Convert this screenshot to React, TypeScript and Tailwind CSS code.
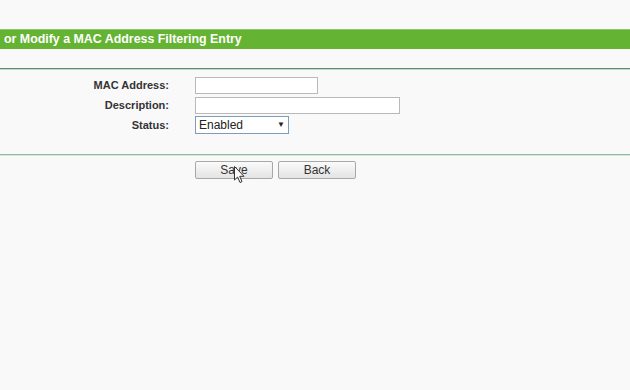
import React from "react";

const font = { fontFamily: '"Liberation Sans", Arial, sans-serif' };

function Row({ label, children }: { label: string; children: React.ReactNode }) {
  return (
    <div className="flex h-[20px] items-center">
      <div className="w-[169px] text-right text-[11px] font-bold text-[#333]">{label}</div>
      <div className="ml-[26px] flex items-center">{children}</div>
    </div>
  );
}

function Cursor() {
  return (
    <svg
      className="pointer-events-none absolute left-[39px] top-[5px]"
      width="12"
      height="18"
      viewBox="0 0 12 18"
    >
      <path
        d="M0.5 0.5 L0.5 14 L3.6 11 L6 16.5 L8 15.6 L5.7 10.3 L10 10.3 Z"
        fill="#fff"
        stroke="#333"
        strokeWidth="1"
        strokeLinejoin="round"
      />
    </svg>
  );
}

const btn =
  "block h-[18px] w-[78px] rounded-[2px] border border-[#a8a8a8] bg-gradient-to-b from-[#fafafa] to-[#e4e4e4] text-[12px] leading-none text-[#333]";

export default function App() {
  return (
    <div className="h-[390px] w-[630px] overflow-hidden bg-[#f9f9f9]" style={font}>
      <div className="h-[29px]" />
      <div className="flex h-[20px] items-center border-t border-[#8fc66a] bg-[#64b332] pl-[4px] text-[12.4px] font-bold text-white">
        or Modify a MAC Address Filtering Entry
      </div>

      <div className="mt-[19px] h-[2px] border-t border-[#5f8c72] bg-[#c2d9c9]" />

      <div className="flex flex-col pt-[5px]">
        <Row label="MAC Address:">
          <input className="h-[17px] w-[123px] border border-[#b9b9b9] bg-white outline-none" />
        </Row>
        <Row label="Description:">
          <input className="h-[17px] w-[205px] border border-[#b9b9b9] bg-white outline-none" />
        </Row>
        <Row label="Status:">
          <div className="flex h-[18px] w-[94px] items-center justify-between border border-[#7f9db9] bg-white pl-[3px] pr-[3px] text-[12px] text-[#222]">
            <span>Enabled</span>
            <span className="text-[8px] leading-none">▼</span>
          </div>
        </Row>
      </div>

      <div className="mt-[19px] h-[2px] border-t border-[#8fb9a0] bg-[#d4e6da]" />

      <div className="ml-[195px] mt-[5px] flex items-start gap-[5px]">
        <div className="relative">
          <button className={btn}>Save</button>
          <Cursor />
        </div>
        <button className={btn}>Back</button>
      </div>
    </div>
  );
}
